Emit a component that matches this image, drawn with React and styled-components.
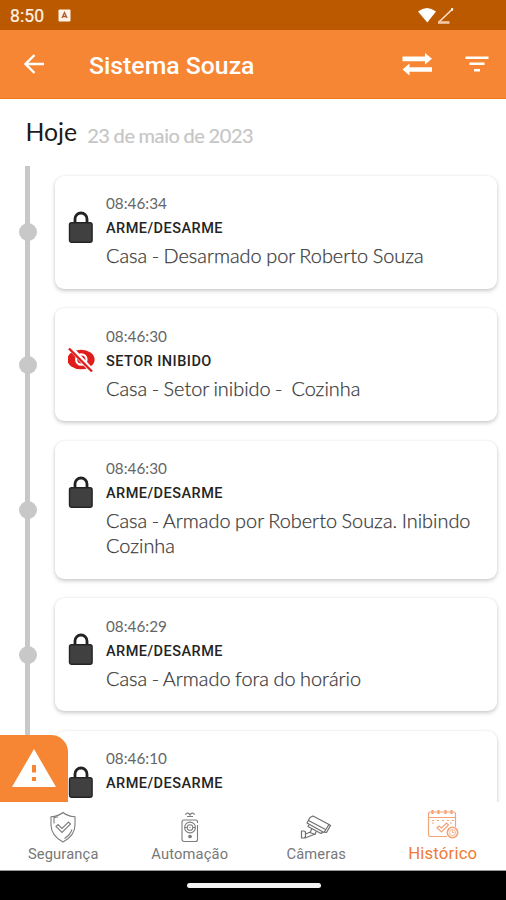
import React from "react";
import styled, { createGlobalStyle } from "styled-components";

const GlobalStyle = createGlobalStyle`
  * { box-sizing: border-box; }
  body { margin: 0; background: #fff; }
`;

const Screen = styled.div`
  width: 506px;
  height: 900px;
  display: flex;
  flex-direction: column;
  overflow: hidden;
  background: #fff;
  font-family: "Lato", sans-serif;
`;

const StatusBar = styled.header`
  height: 30px;
  flex: none;
  display: flex;
  align-items: center;
  padding: 2px 50px 0 10px;
  background: #bb5900;
  color: #fff3e6;
`;

const Clock = styled.span`
  width: 48px;
  font: 400 17.5px/20px "Roboto", sans-serif;
  letter-spacing: 0.1px;
  -webkit-text-stroke: 0.2px;
`;

const StatusIcons = styled.div`
  display: flex;
  margin-left: auto;
`;

const AppBar = styled.div`
  height: 69px;
  flex: none;
  display: flex;
  align-items: center;
  padding: 0 16px 0 23px;
  background: #f68634;
  border-bottom: 1px solid #ee7a17;
`;

const Title = styled.h1`
  flex: 1;
  margin: 3px 0 0 44px;
  color: #fff;
  font: 500 24.8px/30px "Roboto", sans-serif;
`;

const IconButton = styled.button`
  display: flex;
  padding: 0;
  margin-left: ${(p) => p.$gap || 0}px;
  border: 0;
  background: none;
`;

const Content = styled.main`
  flex: 1;
  min-height: 0;
  overflow: hidden;
`;

const DayHeading = styled.div`
  height: 67px;
  display: flex;
  align-items: flex-start;
  gap: 10px;
  padding: 18px 0 0 25.5px;
`;

const Today = styled.span`
  color: #1b1b1b;
  font-size: 24.8px;
  line-height: 30px;
`;

const FullDate = styled.span`
  padding-top: 3px;
  color: #c6c6c6;
  font-size: 20px;
  line-height: 30px;
  letter-spacing: -0.4px;
  word-spacing: -0.7px;
  -webkit-text-stroke: 0.2px;
`;

const Timeline = styled.div`
  display: flex;
  flex-direction: column;
  gap: 19.5px;
  padding: 9.6px 9px 80px 0;
  background: linear-gradient(#c8c8c8, #c8c8c8) 25.3px 0 / 5px 100% no-repeat;
`;

const Entry = styled.div`
  display: grid;
  grid-template-columns: 54.5px 1fr;
  align-items: center;
`;

const Dot = styled.span`
  width: 18px;
  height: 18px;
  margin-left: 19px;
  border-radius: 50%;
  background: #c8c8c8;
`;

const Card = styled.article`
  display: flex;
  padding: 16.5px 16px 21.2px 13px;
  border-radius: 9px;
  background: #fff;
  box-shadow: 0 2px 4px rgba(0, 0, 0, 0.2), 0 0 2px rgba(0, 0, 0, 0.08);
`;

const CardIcon = styled.div`
  width: 38.5px;
  flex: none;
  padding-top: 18.5px;

  svg { display: block; }
`;

const CardText = styled.div`
  min-width: 0;
`;

const Time = styled.div`
  color: #666;
  font-size: 15.3px;
  line-height: 22px;
`;

const Kind = styled.div`
  margin-top: 3px;
  color: #242424;
  font: 500 14.5px/24px "Roboto", sans-serif;
  letter-spacing: 0.47px;
`;

const Description = styled.div`
  padding-top: 2px;
  color: #333;
  font-size: 19.9px;
  font-weight: 300;
  line-height: 24.5px;
  word-spacing: -0.9px;
  white-space: pre-wrap;
  -webkit-text-stroke: 0.25px #444;
`;

const BottomNav = styled.nav`
  position: relative;
  height: 69px;
  flex: none;
  display: grid;
  grid-template-columns: repeat(4, 1fr);
  background: #fff;
  border-bottom: 1px solid #999;
`;

const Tab = styled.div`
  display: flex;
  flex-direction: column;
  align-items: center;
  justify-content: flex-end;
  gap: ${(p) => (p.$active ? 3 : 1)}px;
  padding-bottom: ${(p) => (p.$active ? 7 : 6)}px;
  color: ${(p) => (p.$active ? "#f07a35" : "#777")};
  font: 400 ${(p) => (p.$active ? 16.8 : 14.7)}px/20px "Roboto", sans-serif;
  letter-spacing: 0.15px;
`;

const TabIcon = styled.span`
  height: 32px;

  svg { display: block; }
`;

const AlertButton = styled.button`
  position: absolute;
  left: 0;
  bottom: 68px;
  width: 68px;
  height: 67px;
  padding: 0;
  border: 0;
  border-top-right-radius: 17px;
  background: #f68634;
`;

const GestureBar = styled.footer`
  height: 29px;
  flex: none;
  display: flex;
  justify-content: center;
  padding: 12px 0 0 1px;
  background: #000;
`;

const Pill = styled.div`
  width: 134px;
  height: 5px;
  border-radius: 3px;
  background: #f2f2f2;
`;

const Lock = () => (
  <svg width="26" height="33" viewBox="0 0 26 33">
    <path d="M7 13V8a6 6 0 0 1 12 0v5" fill="none" stroke="#222" strokeWidth="2.8" />
    <rect x="1.5" y="11.7" width="22.6" height="19.6" rx="2" fill="#404040" stroke="#242424" strokeWidth="1.4" />
  </svg>
);

const HiddenEye = () => (
  <svg width="30" height="33" viewBox="0 0 30 33">
    <ellipse cx="13" cy="16.5" rx="13.6" ry="9.8" fill="#df1d1d" />
    <circle cx="13.3" cy="16.5" r="5.2" fill="#df1d1d" stroke="#fff" strokeWidth="2.2" />
    <path d="M2 4.5 25 29" stroke="#fff" strokeWidth="5" />
    <path d="M1 5.5 24 28.5" stroke="#df1d1d" strokeWidth="2.4" />
  </svg>
);

const Shield = () => (
  <svg width="28" height="32" viewBox="0 0 28 32" fill="none" stroke="#7d7d7d" strokeWidth="1.1">
    <path d="M14 1.5c3 2.6 7 3.9 12 4.2v8c0 7.5-4 13-12 17.3C6 26.700 2 21.200 2 13.700v-8C7 5.400 11 4.100 14 1.500Z" />
    <path d="M9 5.700c-1.300.5-2.700.8-4 .9v6M23 18.500c-1.300 4-4 6.800-7.500 9" />
    <path d="m7 15.500 2-2 4 4 6.500-6.500 2 2L13 21.500Z" />
  </svg>
);

const Remote = () => (
  <svg width="20" height="32" viewBox="0 0 20 32" fill="none" stroke="#7d7d7d" strokeWidth="1.1">
    <path d="M5.500 4c.5-2.500 3.500-2.500 4.500 0 1-2.500 4-2.500 4.500 0M7 5.500h6" />
    <path d="M17.500 12v-1.500q0-1.500-1.500-1.500H4Q2 9 2 11v17q0 2.500 2.500 2.500h11q2 0 2-2V14" />
    <circle cx="10" cy="16.500" r="5.400" />
    <circle cx="10" cy="16.500" r="2.800" />
    <path d="M5 16.500h2m6 0h2M9.500 16.500h1" />
    <circle cx="10" cy="25.500" r="1.300" fill="#777" />
  </svg>
);

const Camera = () => (
  <svg width="32" height="32" viewBox="0 0 32 32" fill="none" stroke="#6f6f6f" strokeWidth="1.2" strokeLinejoin="round">
    <g transform="translate(0 1.500)">
      <path d="m10 5 3-1.500 16 8.500-5 8-17-9.500Z" />
      <path d="m8.500 8 17 9M29 12l1.500 1-4 7-2.500-.5M9 12l-1 2 13 7 2-1.500" />
      <path d="m12 16-2 4 5 2 1-3M10.500 19.500l-5 2M14 22l-9 3.500" />
      <path d="M1.500 18.500h2q2 0 2 2v3q0 2-2 2h-2Z" />
    </g>
  </svg>
);

const Calendar = () => (
  <svg width="34" height="32" viewBox="0 0 34 32" fill="none" stroke="#f4a377" strokeWidth="1.2">
    <path d="M21 28.500H4q-1.500 0-1.500-2V6q0-2 2-2h23q2 0 2 2v13M2.500 9.500h27" />
    <path d="M6.500 2v4m6-4v4m7-4v4m6-4v4" strokeWidth="2.200" />
    <path d="M6 12.500h2m3 0h2m3 0h2m3 0h2m3 0h2M6 15h2m16 0h2" strokeWidth="1" />
    <path d="m11 20 2-2 2.500 2 5-5 2 2-7 7Z" />
    <circle cx="26.500" cy="24.500" r="5.200" strokeWidth="1.600" />
    <circle cx="26.500" cy="24.500" r="3" strokeWidth=".8" />
    <path d="M26.500 22v2.500h2" strokeWidth=".8" />
  </svg>
);

const entries = [
  { time: "08:46:34", kind: "ARME/DESARME", text: "Casa - Desarmado por Roberto Souza", Icon: Lock },
  { time: "08:46:30", kind: "SETOR INIBIDO", text: "Casa - Setor inibido -  Cozinha", Icon: HiddenEye },
  { time: "08:46:30", kind: "ARME/DESARME", text: "Casa - Armado por Roberto Souza. Inibindo Cozinha", Icon: Lock },
  { time: "08:46:29", kind: "ARME/DESARME", text: "Casa - Armado fora do horário", Icon: Lock },
  { time: "08:46:10", kind: "ARME/DESARME", text: "", Icon: Lock },
];

const tabs = [
  { label: "Segurança", Icon: Shield },
  { label: "Automação", Icon: Remote },
  { label: "Câmeras", Icon: Camera },
  { label: "Histórico", Icon: Calendar, active: true },
];

export default function App() {
  return (
    <Screen>
      <GlobalStyle />
      <StatusBar>
        <Clock>8:50</Clock>
        <svg width="13" height="15" viewBox="0 0 13 15">
          <rect x=".5" y=".5" width="12" height="12" rx="1" fill="#fff3e9" />
          <path d="m4 9 2.500-5.500L9 9M5 7.500h3" fill="none" stroke="#a65a2a" strokeWidth="1.300" />
        </svg>
        <StatusIcons>
          <svg width="38" height="20" viewBox="0 0 38 20">
            <path d="M0 5.500Q9-1.500 18 5.500L9.300 16.500Z" fill="#fff" />
            <path d="M21 16 35 2.500" fill="none" stroke="#ffe0c8" strokeWidth="1.600" />
            <path d="M20 16.500h11.500" stroke="#f3c9a5" strokeWidth="2.600" />
            <path d="M33 3.500h2" stroke="#fff" strokeWidth="2.600" />
          </svg>
        </StatusIcons>
      </StatusBar>
      <AppBar>
        <IconButton aria-label="Voltar">
          <svg width="22" height="22" viewBox="0 0 22 22" fill="none" stroke="#fff" strokeWidth="2.400">
            <path d="M21 11H3M11.500 2 2.500 11l9 9" />
          </svg>
        </IconButton>
        <Title>Sistema Souza</Title>
        <IconButton aria-label="Trocar">
          <svg width="32" height="24" viewBox="0 0 32 24" fill="#fff">
            <path d="M1.500 4.500h22.500V1L31 6.800l-7 5.700V9.200H1.500Z" />
            <path d="M31 15.300H8.500v-3.800L1.500 17.500l7 6v-3.700H31Z" />
          </svg>
        </IconButton>
        <IconButton aria-label="Filtrar" $gap={31}>
          <svg width="26" height="20" viewBox="0 0 26 20" fill="none" stroke="#fff" strokeWidth="2.400">
            <path d="M1.500 3.800h23M5.500 9.800h15M10 16.200h6" />
          </svg>
        </IconButton>
      </AppBar>
      <Content>
        <DayHeading>
          <Today>Hoje</Today>
          <FullDate>23 de maio de 2023</FullDate>
        </DayHeading>
        <Timeline>
          {entries.map(({ time, kind, text, Icon }) => (
            <Entry key={time + kind}>
              <Dot />
              <Card>
                <CardIcon><Icon /></CardIcon>
                <CardText>
                  <Time>{time}</Time>
                  <Kind>{kind}</Kind>
                  <Description>{text || "\u00a0"}</Description>
                </CardText>
              </Card>
            </Entry>
          ))}
        </Timeline>
      </Content>
      <BottomNav>
        <AlertButton aria-label="Alerta">
          <svg width="68" height="67" viewBox="0 0 68 67">
            <path d="M34 14 56 52H12Z" fill="#fff" />
            <path d="M34 30v7.500M34 42v4" stroke="#f68634" strokeWidth="4" />
          </svg>
        </AlertButton>
        {tabs.map(({ label, Icon, active }) => (
          <Tab key={label} $active={active}>
            <TabIcon><Icon /></TabIcon>
            {label}
          </Tab>
        ))}
      </BottomNav>
      <GestureBar><Pill /></GestureBar>
    </Screen>
  );
}
